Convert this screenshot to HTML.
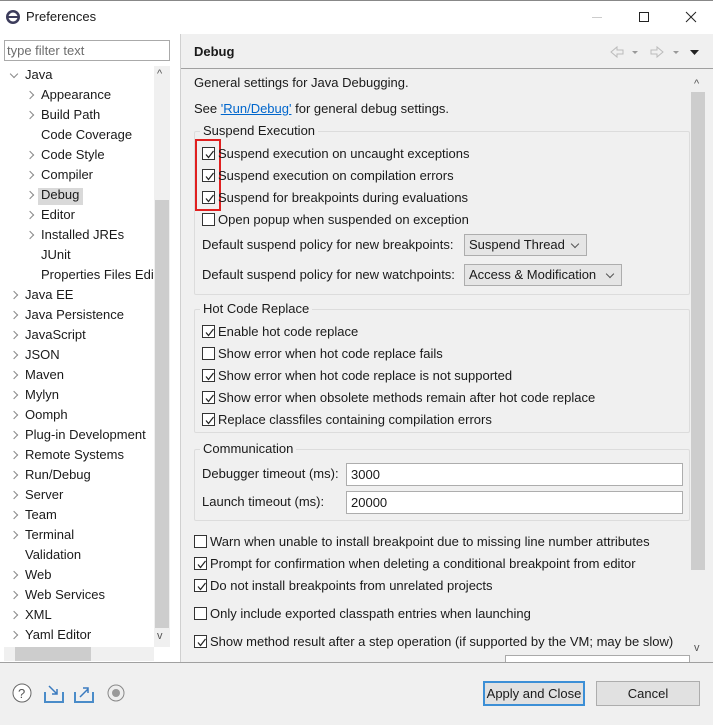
<!DOCTYPE html>
<html><head><meta charset="utf-8"><style>
*{box-sizing:border-box;margin:0;padding:0}
body{width:713px;height:725px;position:relative;overflow:hidden;background:#f0f0f0;font-family:"Liberation Sans","Noto Sans CJK SC",sans-serif;font-size:13px;color:#1a1a1a}
.a{position:absolute;white-space:nowrap}
.t{position:absolute;white-space:nowrap;line-height:16px}
.cb{position:absolute;width:13px;height:13px;border:1px solid #333;background:#fff}
.cb svg{position:absolute;left:1px;top:1px}
.grp{position:absolute;border:1px solid #dcdcdc;border-radius:2px}
.gt{position:absolute;background:#f0f0f0;padding:0 3px;line-height:16px}
.chev{position:absolute;width:6px;height:6px;border-right:1.3px solid #888;border-bottom:1.3px solid #888;transform:rotate(-45deg)}
.combo{position:absolute;height:22px;border:1px solid #adadad;background:#e5e5e5;line-height:20px;padding-left:4px}
.combo:after{content:"";position:absolute;right:8px;top:6px;width:5px;height:5px;border-right:1px solid #555;border-bottom:1px solid #555;transform:rotate(45deg)}
.inp{position:absolute;height:23px;border:1px solid #adadad;background:#fff;line-height:21px;padding-left:4px}
</style></head><body>
<!-- title bar -->
<div class="a" style="left:0;top:0;width:713px;height:34px;background:#fff;border-top:1px solid #888"></div>
<svg class="a" style="left:5px;top:9px" width="16" height="16"><circle cx="8" cy="8" r="7" fill="#3d3d5c"/><circle cx="8" cy="8" r="4.5" fill="#fff"/><rect x="2" y="7" width="12" height="2" fill="#3d3d5c"/></svg>
<div class="t" style="left:26px;top:9px">Preferences</div>
<div class="a" style="left:592px;top:17px;width:10px;height:1px;background:#ccc"></div>
<div class="a" style="left:639px;top:12px;width:10px;height:10px;border:1px solid #222"></div>
<svg class="a" style="left:685px;top:11px" width="12" height="12"><path d="M1 1L11 11M11 1L1 11" stroke="#222" stroke-width="1"/></svg>
<!-- left pane -->
<div class="a" style="left:0;top:34px;width:180px;height:628px;background:#fff"></div>
<div class="a" style="left:180px;top:34px;width:1px;height:628px;background:#d0d0d0"></div>
<div class="a" style="left:4px;top:40px;width:166px;height:21px;border:1px solid #aaa"></div>
<div class="t" style="left:7px;top:43px;color:#6d6d6d">type filter text</div>
<div class="a" style="left:154px;top:66px;width:16px;height:581px;background:#f0f0f0"></div>
<div class="a" style="left:155px;top:200px;width:14px;height:428px;background:#cdcdcd"></div>
<div class="t" style="left:157px;top:66px;color:#555;font-size:11px">^</div>
<div class="t" style="left:157px;top:628px;color:#555;font-size:11px">v</div>
<div class="a" style="left:4px;top:647px;width:150px;height:14px;background:#f0f0f0"></div>
<div class="a" style="left:15px;top:647px;width:76px;height:14px;background:#cdcdcd"></div>
<div class="a" style="left:38px;top:188px;width:45px;height:17px;background:#d9d9d9"></div>
<div class="chev" style="left:11px;top:71px;transform:rotate(45deg)"></div>
<div class="t" style="left:25px;top:67px">Java</div>
<div class="chev" style="left:27px;top:92px"></div><div class="t" style="left:41px;top:87px">Appearance</div>
<div class="chev" style="left:27px;top:112px"></div><div class="t" style="left:41px;top:107px">Build Path</div>
<div class="t" style="left:41px;top:127px">Code Coverage</div>
<div class="chev" style="left:27px;top:152px"></div><div class="t" style="left:41px;top:147px">Code Style</div>
<div class="chev" style="left:27px;top:172px"></div><div class="t" style="left:41px;top:167px">Compiler</div>
<div class="chev" style="left:27px;top:192px"></div><div class="t" style="left:41px;top:187px">Debug</div>
<div class="chev" style="left:27px;top:212px"></div><div class="t" style="left:41px;top:207px">Editor</div>
<div class="chev" style="left:27px;top:232px"></div><div class="t" style="left:41px;top:227px">Installed JREs</div>
<div class="t" style="left:41px;top:247px">JUnit</div>
<div class="t" style="left:41px;top:267px;width:113px;overflow:hidden">Properties Files Editor</div>
<div class="chev" style="left:11px;top:292px"></div><div class="t" style="left:25px;top:287px">Java EE</div>
<div class="chev" style="left:11px;top:312px"></div><div class="t" style="left:25px;top:307px">Java Persistence</div>
<div class="chev" style="left:11px;top:332px"></div><div class="t" style="left:25px;top:327px">JavaScript</div>
<div class="chev" style="left:11px;top:352px"></div><div class="t" style="left:25px;top:347px">JSON</div>
<div class="chev" style="left:11px;top:372px"></div><div class="t" style="left:25px;top:367px">Maven</div>
<div class="chev" style="left:11px;top:392px"></div><div class="t" style="left:25px;top:387px">Mylyn</div>
<div class="chev" style="left:11px;top:412px"></div><div class="t" style="left:25px;top:407px">Oomph</div>
<div class="chev" style="left:11px;top:432px"></div><div class="t" style="left:25px;top:427px">Plug-in Development</div>
<div class="chev" style="left:11px;top:452px"></div><div class="t" style="left:25px;top:447px">Remote Systems</div>
<div class="chev" style="left:11px;top:472px"></div><div class="t" style="left:25px;top:467px">Run/Debug</div>
<div class="chev" style="left:11px;top:492px"></div><div class="t" style="left:25px;top:487px">Server</div>
<div class="chev" style="left:11px;top:512px"></div><div class="t" style="left:25px;top:507px">Team</div>
<div class="chev" style="left:11px;top:532px"></div><div class="t" style="left:25px;top:527px">Terminal</div>
<div class="t" style="left:25px;top:547px">Validation</div>
<div class="chev" style="left:11px;top:572px"></div><div class="t" style="left:25px;top:567px">Web</div>
<div class="chev" style="left:11px;top:592px"></div><div class="t" style="left:25px;top:587px">Web Services</div>
<div class="chev" style="left:11px;top:612px"></div><div class="t" style="left:25px;top:607px">XML</div>
<div class="chev" style="left:11px;top:632px"></div><div class="t" style="left:25px;top:627px">Yaml Editor</div>
<!-- right header -->
<div class="t" style="left:194px;top:44px;font-weight:bold">Debug</div>
<svg class="a" style="left:608px;top:44px" width="98" height="16"><path d="M3 8L9 3V6H15V10H9V13Z" fill="none" stroke="#bbb"/><path d="M24 7h6l-3 3z" fill="#999"/><path d="M55 8L49 3V6H43V10H49V13Z" fill="none" stroke="#bbb"/><path d="M65 7h6l-3 3z" fill="#999"/><path d="M82 6h9l-4.5 5z" fill="#222"/></svg>
<div class="a" style="left:181px;top:68px;width:532px;height:1px;background:#a0a0a0"></div>
<!-- right scrollbar -->
<div class="a" style="left:690px;top:72px;width:16px;height:588px;background:#f0f0f0"></div>
<div class="a" style="left:691px;top:92px;width:14px;height:478px;background:#cdcdcd"></div>
<div class="t" style="left:694px;top:76px;color:#555;font-size:11px">^</div>
<div class="t" style="left:694px;top:640px;color:#555;font-size:11px">v</div>
<div class="t" style="left:194px;top:75px">General settings for Java Debugging.</div>
<div class="t" style="left:194px;top:101px">See <span style="color:#0066cc;text-decoration:underline">'Run/Debug'</span> for general debug settings.</div>
<!-- groups -->
<div class="grp" style="left:194px;top:131px;width:496px;height:164px"></div>
<div class="gt" style="left:200px;top:123px">Suspend Execution</div>
<div class="grp" style="left:194px;top:309px;width:496px;height:124px"></div>
<div class="gt" style="left:200px;top:301px">Hot Code Replace</div>
<div class="grp" style="left:194px;top:449px;width:496px;height:72px"></div>
<div class="gt" style="left:200px;top:441px">Communication</div>
<div class="a" style="left:195px;top:139px;width:26px;height:72px;border:2px solid #e02020"></div>
<!-- checkboxes -->
<div id="cbs"></div>
<div class="combo" style="left:464px;top:234px;width:123px">Suspend Thread</div>
<div class="t" style="left:202px;top:237px">Default suspend policy for new breakpoints:</div>
<div class="combo" style="left:464px;top:264px;width:158px">Access &amp; Modification</div>
<div class="t" style="left:202px;top:267px">Default suspend policy for new watchpoints:</div>
<div class="t" style="left:202px;top:466px">Debugger timeout (ms):</div>
<div class="inp" style="left:346px;top:463px;width:337px">3000</div>
<div class="t" style="left:202px;top:494px">Launch timeout (ms):</div>
<div class="inp" style="left:346px;top:491px;width:337px">20000</div>
<div class="a" style="left:505px;top:655px;width:185px;height:7px;border:1px solid #aaa;border-bottom:none;background:#fff"></div>
<!-- bottom -->
<div class="a" style="left:0;top:662px;width:713px;height:1px;background:#a0a0a0"></div>
<svg class="a" style="left:12px;top:682px" width="120" height="24"><circle cx="10" cy="11" r="9" fill="#fff" stroke="#666"/><text x="6" y="16" font-size="13" fill="#555" font-family="Liberation Sans">?</text><path d="M33 10v10h18V10" fill="none" stroke="#4a8cc9" stroke-width="2"/><path d="M37 4l8 8M45 7v5h-5" fill="none" stroke="#3b7bbf" stroke-width="1.5"/><path d="M63 10v10h18V10" fill="none" stroke="#4a8cc9" stroke-width="2"/><path d="M68 15l8-8M71 6h5v5" fill="none" stroke="#3b7bbf" stroke-width="1.5"/><circle cx="104" cy="11" r="8" fill="#eee" stroke="#888"/><circle cx="104" cy="11" r="4" fill="#999"/></svg>
<div class="a" style="left:483px;top:681px;width:102px;height:25px;border:2px solid #3c8fd6;background:#e1e1e1;text-align:center;line-height:21px">Apply and Close</div>
<div class="a" style="left:596px;top:681px;width:104px;height:25px;border:1px solid #adadad;background:#e1e1e1;text-align:center;line-height:23px">Cancel</div>
<script>
var rows=[[202,147,1,"Suspend execution on uncaught exceptions"],[202,169,1,"Suspend execution on compilation errors"],[202,191,1,"Suspend for breakpoints during evaluations"],[202,213,0,"Open popup when suspended on exception"],
[202,325,1,"Enable hot code replace"],[202,347,0,"Show error when hot code replace fails"],[202,369,1,"Show error when hot code replace is not supported"],[202,391,1,"Show error when obsolete methods remain after hot code replace"],[202,413,1,"Replace classfiles containing compilation errors"],
[194,535,0,"Warn when unable to install breakpoint due to missing line number attributes"],[194,557,1,"Prompt for confirmation when deleting a conditional breakpoint from editor"],[194,579,1,"Do not install breakpoints from unrelated projects"],[194,607,0,"Only include exported classpath entries when launching"],[194,635,1,"Show method result after a step operation (if supported by the VM; may be slow)"]];
var h="";rows.forEach(function(r){h+='<div class="cb" style="left:'+r[0]+'px;top:'+r[1]+'px">'+(r[2]?'<svg width="11" height="11"><path d="M2 5.5L4.5 8.5L9.5 2" fill="none" stroke="#222" stroke-width="1.2"/></svg>':'')+'</div><div class="t" style="left:'+(r[0]+16)+'px;top:'+(r[1]-1)+'px">'+r[3]+'</div>';});
document.getElementById("cbs").innerHTML=h;
</script>
</body></html>
